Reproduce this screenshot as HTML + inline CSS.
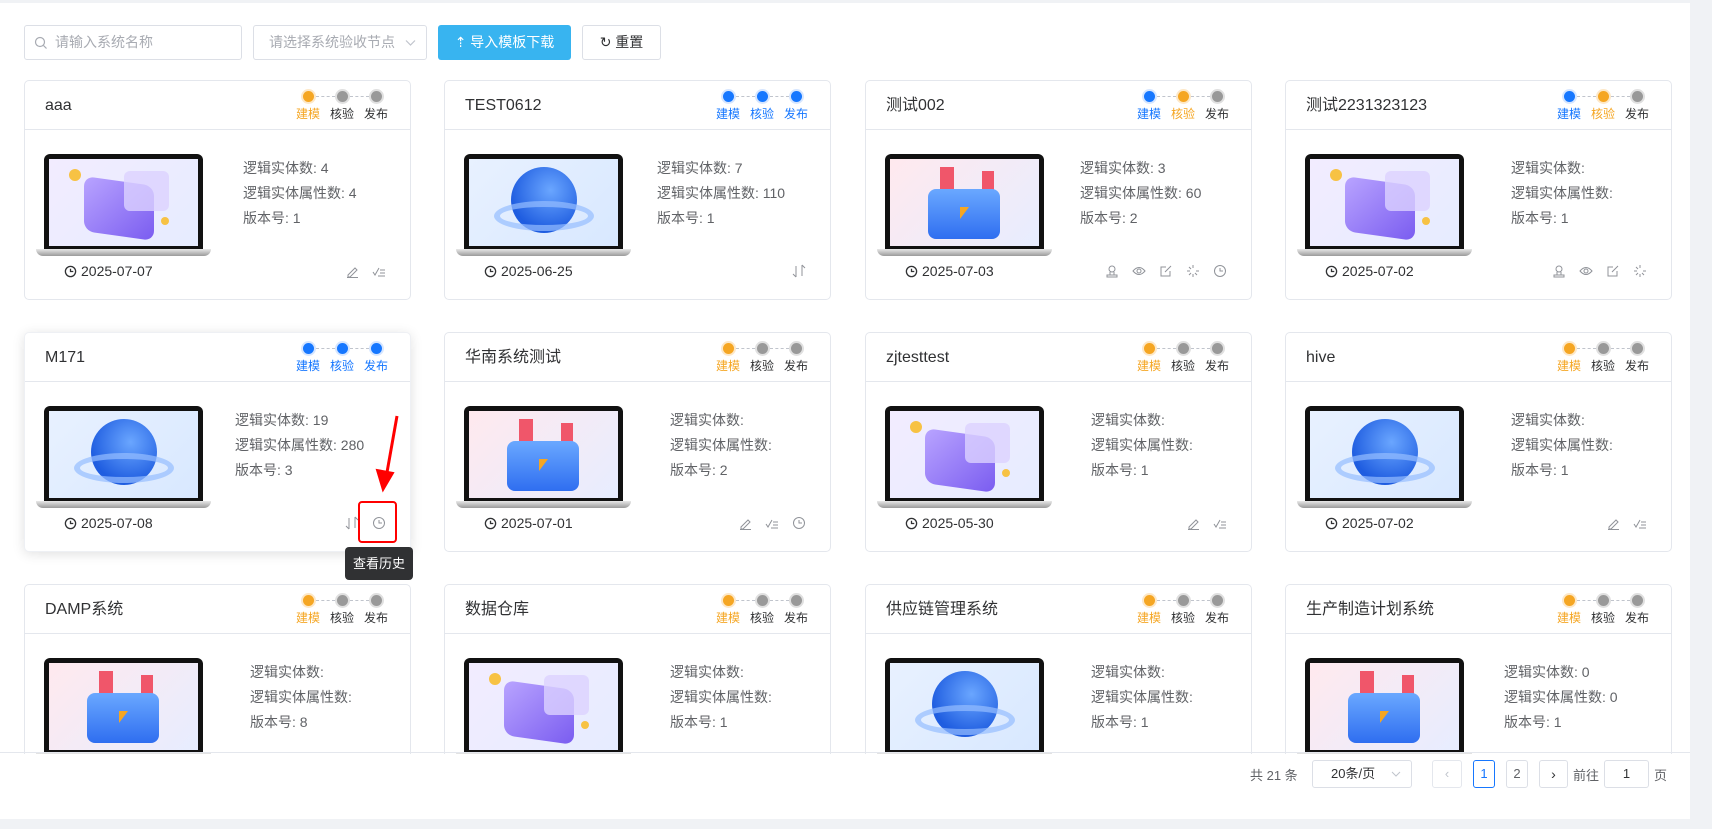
<!DOCTYPE html>
<html><head><meta charset="utf-8"><style>
*{box-sizing:border-box;margin:0;padding:0}
body{width:1712px;height:829px;background:#f0f2f5;font-family:"Liberation Sans","Noto Sans CJK SC",sans-serif;position:relative;overflow:hidden;color:#303133}
.panel{position:absolute;left:0;top:3px;width:1690px;height:816px;background:#fff}
.grid{position:absolute;left:0;top:0;width:1690px;height:751px;overflow:hidden}
.inp{position:absolute;top:22px;height:35px;border:1px solid #dcdfe6;border-radius:3px;font-size:14px;color:#a8abb2;line-height:33px}
.btn{position:absolute;top:22px;height:35px;border-radius:3px;font-size:14px;line-height:35px;text-align:center}
.card{position:absolute;width:387px;height:220px;border:1px solid #e4e7ed;border-radius:5px;background:#fff}
.hd{position:absolute;left:0;top:0;right:0;height:49px;border-bottom:1px solid #e4e7ed}
.tt{position:absolute;left:20px;top:0;height:49px;line-height:49px;font-size:16px;color:#303133}
.dot{position:absolute;top:8px;width:15px;height:15px;border-radius:50%}
.dot i{position:absolute;left:2px;top:2px;width:11px;height:11px;border-radius:50%}
.b{background:#d6e6ff}.b i{background:#1677ff}
.o{background:#fde8c8}.o i{background:#f5a623}
.g{background:#e0e0e0}.g i{background:#999}
.ln{position:absolute;top:15px;width:19px;border-top:1px dashed #c0c4cc}
.lb{position:absolute;top:25px;font-size:12px;width:30px;text-align:center;line-height:17px}
.lo{color:#f5a623}.lbk{color:#303133}.lbl{color:#1677ff}
.lap{position:absolute;left:11px;top:73px;width:175px;height:104px}
.scr{position:absolute;left:8px;top:0;width:159px;height:95px;background:#111;border-radius:6px 6px 0 0;padding:5px 5px 3px}
.scr>div{width:100%;height:100%;position:relative;overflow:hidden}
.base{position:absolute;left:0;top:95px;width:175px;height:7px;background:linear-gradient(#e8e8e8,#9a9a9a);border-radius:0 0 8px 8px}
.info{position:absolute;top:75px;font-size:14px;line-height:25px;color:#606266}
.dt{position:absolute;left:39px;top:181px;font-size:14px;color:#303133;line-height:18px}
.dt svg{vertical-align:-2px;margin-right:4px}
.ic{position:absolute;top:183px;width:14px;height:14px}
.pur{background:linear-gradient(135deg,#f2ecff,#e6ecff)}
.glo{background:linear-gradient(135deg,#e8f1ff,#d8e8ff)}
.fol{background:linear-gradient(135deg,#ffe9ee,#e7edff)}
.pg{position:absolute;top:760px;height:28px;border:1px solid #dcdfe6;border-radius:3px;text-align:center;line-height:26px;font-size:13px}
</style></head><body>
<div class="panel">
<div class="grid">
<div class="inp" style="left:24px;width:218px;padding-left:30px"><svg style="position:absolute;left:9px;top:10px" width="14" height="14" viewBox="0 0 14 14"><circle cx="6" cy="6" r="4.5" fill="none" stroke="#a8abb2" stroke-width="1.2"/><path d="M9.5 9.5L12.5 12.5" stroke="#a8abb2" stroke-width="1.2"/></svg>请输入系统名称</div>
<div class="inp" style="left:253px;width:174px;padding-left:15px">请选择系统验收节点<svg style="position:absolute;right:10px;top:13px" width="11" height="8" viewBox="0 0 11 8"><path d="M1 1.5L5.5 6 10 1.5" fill="none" stroke="#c0c4cc" stroke-width="1.2"/></svg></div>
<div class="btn" style="left:438px;width:133px;background:#38b4f0;color:#fff">⇡ 导入模板下载</div>
<div class="btn" style="left:582px;width:79px;border:1px solid #dcdfe6;color:#303133;line-height:33px">↻ 重置</div>
<div style="position:absolute;left:1695px;top:52px;width:7px;height:383px;background:#c8c8c8;border-radius:4px"></div>
</div>
</div>
<div id="cards" style="position:absolute;left:0;top:0;width:1690px;height:754px;overflow:hidden"></div>
<div style="position:absolute;left:0;top:752px;width:1690px;height:1px;background:#e4e7ed"></div>
<div style="position:absolute;left:1250px;top:765px;font-size:13px;color:#606266">共 21 条</div>
<div class="pg" style="left:1312px;width:100px;text-align:left;padding-left:18px">20条/页<svg style="position:absolute;right:10px;top:10px" width="10" height="7" viewBox="0 0 10 7"><path d="M1 1L5 5 9 1" fill="none" stroke="#c0c4cc"/></svg></div>
<div class="pg" style="left:1432px;width:30px;border-color:#e4e7ed;color:#c0c4cc">‹</div>
<div class="pg" style="left:1473px;width:22px;border-color:#1677ff;color:#1677ff">1</div>
<div class="pg" style="left:1506px;width:22px;color:#606266">2</div>
<div class="pg" style="left:1539px;width:29px;font-size:14px">›</div>
<div style="position:absolute;left:1573px;top:765px;font-size:13px;color:#606266">前往</div>
<div class="pg" style="left:1604px;width:45px">1</div>
<div style="position:absolute;left:1654px;top:765px;font-size:13px;color:#606266">页</div>
<div style="position:absolute;left:345px;top:547px;width:68px;height:33px;background:#303133;border-radius:4px;color:#fff;font-size:13px;line-height:33px;text-align:center;z-index:5">查看历史</div>
<div style="position:absolute;left:358px;top:501px;width:39px;height:42px;border:2px solid #f00;border-radius:4px;z-index:5"></div>
<svg style="position:absolute;left:0;top:0;z-index:5" width="1712" height="829"><path d="M397 416L386 478" stroke="#f00" stroke-width="3"/><path d="M377 470L383 490 393 473Z" fill="#f00" stroke="#f00" stroke-width="2"/></svg>
<script>
const cols=[24,444,865,1285],rows=[80,332,584];
const data=[
["aaa","ogg","4","4","1","2025-07-07","pur",218,"ed,ck"],
["TEST0612","bbb","7","110","1","2025-06-25","glo",212,"so"],
["测试002","bog","3","60","2","2025-07-03","fol",214,"us,ey,sq,ld,cl"],
["测试2231323123","bog","","","1","2025-07-02","pur",225,"us,ey,sq,ld"],
["M171","bbb","19","280","3","2025-07-08","glo",210,"so,cl"],
["华南系统测试","ogg","","","2","2025-07-01","fol",225,"ed,ck,cl"],
["zjtesttest","ogg","","","1","2025-05-30","pur",225,"ed,ck"],
["hive","ogg","","","1","2025-07-02","glo",225,"ed,ck"],
["DAMP系统","ogg","","","8","","fol",225,""],
["数据仓库","ogg","","","1","","pur",225,""],
["供应链管理系统","ogg","","","1","","glo",225,""],
["生产制造计划系统","ogg","0","0","1","","fol",218,""]];
const icons={
ed:'<path d="M3 11L10 4l2 2-7 7H3z M2 13.5h11" fill="none" stroke="#909399"/>',
ck:'<path d="M1 8l2 3 4-7 M8 6h5 M8 9h5 M6 12h7" fill="none" stroke="#909399"/>',
so:'<path d="M4 2v11 M4 13L1 10 M10 12V1 M10 1l3 3" fill="none" stroke="#909399"/>',
us:'<circle cx="7" cy="5" r="3" fill="none" stroke="#909399"/><path d="M2 11h10v2H2z M5 8v3 M9 8v3" fill="none" stroke="#909399"/>',
ey:'<path d="M1 7q6-7 12 0q-6 7-12 0z" fill="none" stroke="#909399"/><circle cx="7" cy="7" r="2" fill="none" stroke="#909399"/>',
sq:'<path d="M11 7v5H2V3h5 M6 8l6-6" fill="none" stroke="#909399"/>',
ld:'<path d="M7 1v3 M7 10v3 M1 7h3 M10 7h3 M3 3l2 2 M9 9l2 2 M3 11l2-2" fill="none" stroke="#909399"/>',
cl:'<circle cx="7" cy="7" r="5.5" fill="none" stroke="#909399"/><path d="M7 4v3h3" fill="none" stroke="#909399"/>'};
function art(t){
 if(t=="pur")return '<div class="pur"><div style="position:absolute;left:35px;top:22px;width:70px;height:55px;border-radius:10px;background:linear-gradient(135deg,#b9a4ff,#7a5cf0);transform:skewY(8deg)"></div><div style="position:absolute;left:75px;top:12px;width:45px;height:40px;border-radius:6px;background:rgba(220,210,255,.8)"></div><div style="position:absolute;left:20px;top:10px;width:12px;height:12px;border-radius:50%;background:#f7c244"></div><div style="position:absolute;left:112px;top:58px;width:8px;height:8px;border-radius:50%;background:#f7c244"></div></div>';
 if(t=="glo")return '<div class="glo"><div style="position:absolute;left:42px;top:8px;width:66px;height:66px;border-radius:50%;background:radial-gradient(circle at 60% 35%,#6aa6ff,#1f5de0 70%)"></div><div style="position:absolute;left:25px;top:42px;width:100px;height:30px;border-radius:50%;border:6px solid rgba(150,190,255,.7)"></div></div>';
 return '<div class="fol"><div style="position:absolute;left:50px;top:8px;width:14px;height:40px;background:#f0566a"></div><div style="position:absolute;left:92px;top:12px;width:12px;height:36px;background:#f0566a"></div><div style="position:absolute;left:38px;top:30px;width:72px;height:50px;border-radius:8px;background:linear-gradient(#6aa8ff,#2f6ef0)"></div><div style="position:absolute;left:70px;top:48px;border-left:9px solid #f5a623;border-bottom:12px solid transparent"></div></div>';
}
let h='';
data.forEach((d,i)=>{
 const x=cols[i%4],y=rows[Math.floor(i/4)];
 const st=d[1],R=387;
 const lc={o:'lo',g:'lbk',b:'lbl'};
 let steps='';
 [0,1,2].forEach(k=>{const cx=R-104+k*34;steps+=`<div class="dot ${st[k]}" style="left:${cx-7}px"><i></i></div><div class="lb ${lc[st[k]]}" style="left:${cx-15}px">${['建模','核验','发布'][k]}</div>`;if(k<2)steps+=`<div class="ln" style="left:${cx+8}px"></div>`;});
 let ic='';
 if(d[8]){const l=d[8].split(',');l.forEach((n,j)=>{ic+=`<svg class="ic" style="left:${R-40-(l.length-1-j)*27}px" viewBox="0 0 14 14">${icons[n]}</svg>`});}
 h+=`<div class="card" style="left:${x}px;top:${y}px${i==4?';box-shadow:0 2px 12px rgba(0,0,0,.12);border-color:#eef0f4':''}"><div class="hd"><div class="tt">${d[0]}</div>${steps}</div><div class="lap"><div class="scr">${art(d[6])}</div><div class="base"></div></div><div class="info" style="left:${d[7]-0}px">逻辑实体数: ${d[2]}<br>逻辑实体属性数: ${d[3]}<br>版本号: ${d[4]}</div>${d[5]?`<div class="dt"><svg width="13" height="13" viewBox="0 0 14 14"><circle cx="7" cy="7" r="5.5" fill="none" stroke="#303133" stroke-width="1.4"/><path d="M7 4v3h3" fill="none" stroke="#303133" stroke-width="1.4"/></svg>${d[5]}</div>`:''}${ic}${i==4?'<div style="position:absolute;left:344px;top:177px;width:24px;height:22px;background:#eef1f4;border-radius:3px;z-index:-1"></div>':''}</div>`;
});
document.getElementById('cards').innerHTML=h;
</script>
</body></html>
